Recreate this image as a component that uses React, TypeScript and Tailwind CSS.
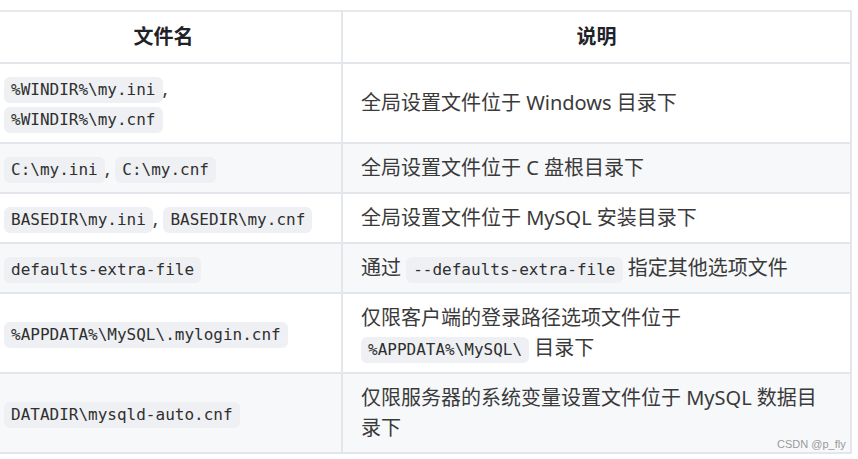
const rows: { file: React.ReactNode; desc: React.ReactNode }[] = [
  {
    file: (
      <>
        <Code>%WINDIR%\my.ini</Code>, <Code>%WINDIR%\my.cnf</Code>
      </>
    ),
    desc: "全局设置文件位于 Windows 目录下",
  },
  {
    file: (
      <>
        <Code>C:\my.ini</Code>, <Code>C:\my.cnf</Code>
      </>
    ),
    desc: "全局设置文件位于 C 盘根目录下",
  },
  {
    file: (
      <>
        <Code>BASEDIR\my.ini</Code>, <Code>BASEDIR\my.cnf</Code>
      </>
    ),
    desc: "全局设置文件位于 MySQL 安装目录下",
  },
  {
    file: <Code>defaults-extra-file</Code>,
    desc: (
      <>
        通过 <Code>--defaults-extra-file</Code> 指定其他选项文件
      </>
    ),
  },
  {
    file: <Code>%APPDATA%\MySQL\.mylogin.cnf</Code>,
    desc: (
      <>
        仅限客户端的登录路径选项文件位于 <Code>%APPDATA%\MySQL\</Code> 目录下
      </>
    ),
  },
  {
    file: <Code>DATADIR\mysqld-auto.cnf</Code>,
    desc: "仅限服务器的系统变量设置文件位于 MySQL 数据目录下",
  },
];

function Code({ children }: { children: React.ReactNode }) {
  return (
    <code className="inline-block rounded-md bg-[#eef0f3] px-[7px] py-[2px] font-['DejaVu_Sans_Mono',monospace] text-[16px] leading-[22px] text-[#2f2f2f]">
      {children}
    </code>
  );
}

export default function App() {
  return (
    <div className="relative h-[459px] w-[858px] overflow-hidden bg-white font-['Noto_Sans','Noto_Sans_CJK_SC',sans-serif] text-[20px] leading-[30px] text-[#3a3a3a]">
      <table className="-ml-[14px] mt-[10px] w-[866px] table-fixed border-t-2 border-[#e6e8eb]">
        <colgroup>
          <col className="w-[356px]" />
          <col />
        </colgroup>
        <thead>
          <tr className="border-b-2 border-[#e3e6ea]">
            <th className="border-r-2 border-[#e3e6ea] py-[10px] text-center font-bold text-[#1f2328]">
              文件名
            </th>
            <th className="border-r-2 border-[#e3e6ea] py-[10px] text-center font-bold text-[#1f2328]">
              说明
            </th>
          </tr>
        </thead>
        <tbody>
          {rows.map((r, i) => (
            <tr
              key={i}
              className={`border-b-2 border-[#e3e6ea] ${i % 2 === 1 ? "bg-[#f6f8fa]" : "bg-white"}`}
            >
              <td className="border-r-2 border-[#e3e6ea] py-[9px] pl-[18px] pr-[12px] align-middle">
                {r.file}
              </td>
              <td className="border-r-2 border-[#e3e6ea] py-[9px] pl-[18px] pr-[16px] align-middle">
                {r.desc}
              </td>
            </tr>
          ))}
        </tbody>
      </table>
      <span className="absolute left-[777px] top-[438px] font-['Liberation_Sans',sans-serif] text-[11px] leading-[13px] text-[#9a9a9a]">
        CSDN @p_fly
      </span>
    </div>
  );
}
